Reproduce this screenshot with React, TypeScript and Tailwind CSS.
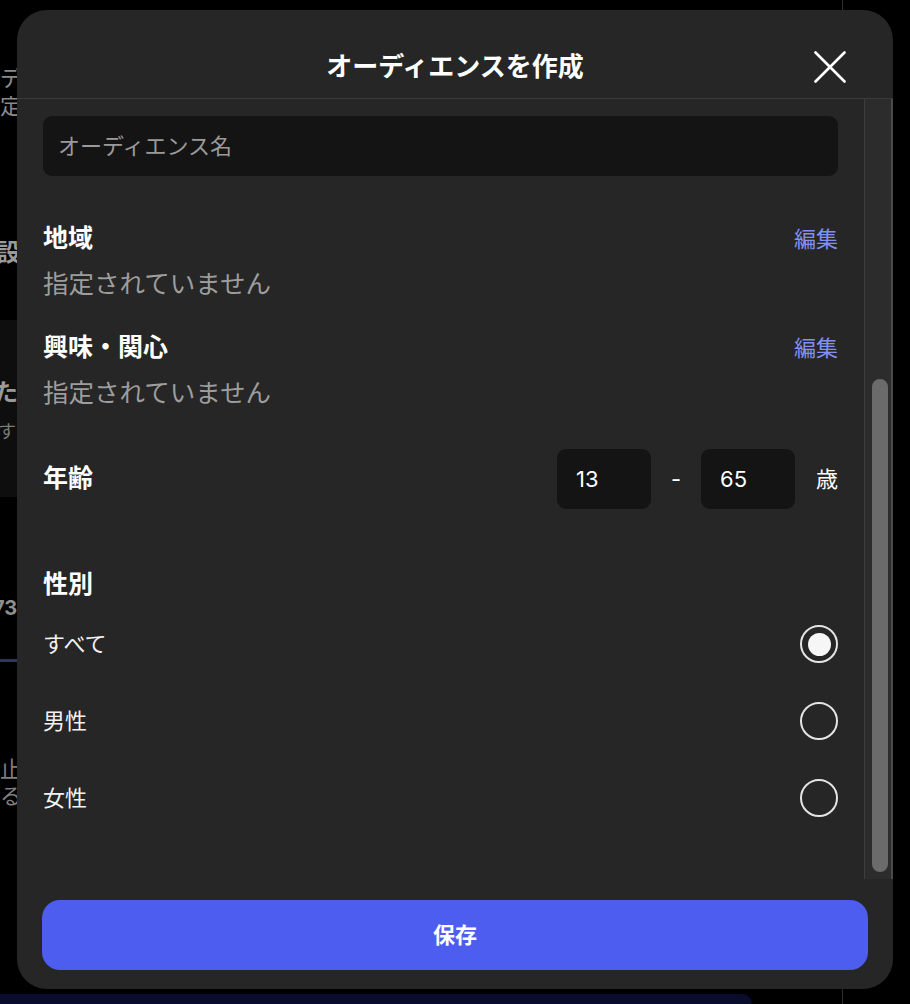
import { useState } from "react";

const genders = [
  { id: "all", label: "すべて" },
  { id: "male", label: "男性" },
  { id: "female", label: "女性" },
];

function CloseIcon() {
  return (
    <svg width="32" height="32" viewBox="0 0 32 32" fill="none">
      <path d="M1.5 1.5L30.5 30.5M30.5 1.5L1.5 30.5" stroke="#ffffff" strokeWidth="2.6" strokeLinecap="round" />
    </svg>
  );
}

function Radio({ checked }: { checked: boolean }) {
  return (
    <span className="flex h-[38px] w-[38px] items-center justify-center rounded-full border-2 border-[#e4e4e4]">
      {checked && <span className="h-[23px] w-[23px] rounded-full bg-[#f6f6f6]" />}
    </span>
  );
}

function Section({ title, value }: { title: string; value: string }) {
  return (
    <div>
      <div className="flex h-[36px] items-center justify-between">
        <h3 className="text-[25px] font-bold text-white">{title}</h3>
        <button className="text-[22px] text-[#8191f3]">編集</button>
      </div>
      <p className="mt-[9px] h-[36px] text-[25.5px] leading-[36px] text-[#9d9d9d]">{value}</p>
    </div>
  );
}

export default function App() {
  const [gender, setGender] = useState("all");

  return (
    <div className="relative h-[1004px] w-full overflow-hidden bg-black font-[Inter,'Noto_Sans_CJK_JP',sans-serif]">
      {/* Page behind the dialog */}
      <div className="flex h-full">
        <div className="flex w-[842px] flex-col">
          <div className="mt-[64px] text-[22px] leading-[28px] text-[#8a8a8a]">
            <p>デ</p>
            <p>定</p>
          </div>
          <p className="mt-[119px] -ml-[3px] text-[24px] font-bold leading-[28px] text-[#9a9a9a]">設</p>
          <div className="mt-[53px] h-[177px] bg-[#0e0e0e] pt-[59px]">
            <p className="-ml-[6px] text-[24px] font-bold leading-[28px] text-[#9a9a9a]">た</p>
            <p className="mt-[13px] -ml-[2px] text-[18px] leading-[24px] text-[#7a7a7a]">す</p>
          </div>
          <p className="mt-[99px] -ml-[7px] text-[20px] font-bold leading-[24px] text-[#8f8f8f]">73</p>
          <div className="mt-[39px] h-[3px] w-[120px] bg-[#1f3d63]" />
          <div className="mt-[94px] text-[22px] leading-[27px] text-[#7f7f7f]">
            <p>止</p>
            <p>る</p>
          </div>
          <div className="mt-auto h-[10px] w-[752px] rounded-tr-[14px] bg-[#0a0c2e]" />
        </div>
        <div className="flex-1 border-l border-[#2e2e2e]" />
      </div>

      {/* Dialog */}
      <div className="absolute left-[17px] top-[10px] flex h-[979px] w-[876px] flex-col overflow-hidden rounded-[30px] bg-[#262626]">
        <header className="grid h-[89px] shrink-0 grid-cols-[1fr_auto_1fr] items-center border-b border-[#3a3a3a] px-[47px] pt-[26px]">
          <span />
          <h2 className="text-[26px] font-bold leading-[30px] text-white">オーディエンスを作成</h2>
          <button className="justify-self-end">
            <CloseIcon />
          </button>
        </header>

        <div className="flex h-[780px] shrink-0 overflow-hidden">
          <div className="flex-1 px-[26px] pt-[17px]">
            <div className="flex h-[60px] items-center rounded-[9px] bg-[#141414] px-[15px] text-[22px] text-[#9a9a9a]">
              オーディエンス名
            </div>

            <div className="mt-[45px]">
              <Section title="地域" value="指定されていません" />
            </div>
            <div className="mt-[28px]">
              <Section title="興味・関心" value="指定されていません" />
            </div>

            <div className="mt-[38px] flex h-[60px] items-center">
              <h3 className="flex-1 text-[25px] font-bold text-white">年齢</h3>
              <div className="flex h-[60px] w-[94px] items-center rounded-[9px] bg-[#141414] pl-[19px] text-[22px] text-white">13</div>
              <span className="flex w-[50px] justify-center text-[22px] text-white">-</span>
              <div className="flex h-[60px] w-[94px] items-center rounded-[9px] bg-[#141414] pl-[19px] text-[22px] text-white">65</div>
              <span className="ml-[21px] text-[22px] text-white">歳</span>
            </div>

            <h3 className="mt-[57px] h-[36px] text-[25px] font-bold leading-[36px] text-white">性別</h3>
            <div className="mt-[23px] flex flex-col gap-[39px]">
              {genders.map((g) => (
                <label
                  key={g.id}
                  className="flex h-[38px] cursor-pointer items-center justify-between"
                  onClick={() => setGender(g.id)}
                >
                  <span className="text-[22px] text-[#f2f2f2]">{g.label}</span>
                  <Radio checked={gender === g.id} />
                </label>
              ))}
            </div>
          </div>

          {/* Scrollbar */}
          <div className="w-[29px] shrink-0 border-l border-r-2 border-l-[#3d3d3d] border-r-[#4a4a4a] bg-[#2c2c2c] pl-[7px]">
            <div className="mt-[280px] h-[493px] w-[16px] rounded-full bg-[#6b6b6b]" />
          </div>
        </div>

        <div className="flex-1 px-[25px] pt-[21px]">
          <button className="flex h-[70px] w-full items-center justify-center rounded-[18px] bg-[#4d5df0] text-[22px] font-bold text-white">
            保存
          </button>
        </div>
      </div>
    </div>
  );
}
